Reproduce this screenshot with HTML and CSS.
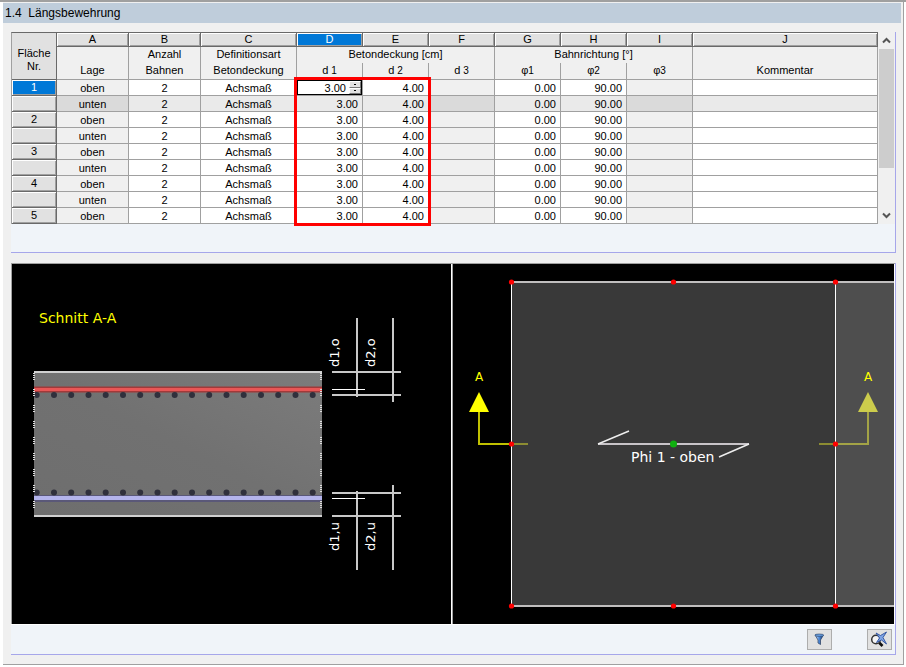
FILE: index.html
```html
<!DOCTYPE html>
<html lang="de">
<head>
    <meta charset="UTF-8">
    <meta name="viewport" content="width=device-width, initial-scale=1.0">
    <title>1.4 Längsbewehrung</title>
    <link rel="stylesheet" href="styles.css">
</head>
<body>
    <main class="window">
        <h1 class="title">1.4&nbsp; Längsbewehrung</h1>

        <section class="panel table-panel">
            <div class="grid-area">
                <div class="grid-wrap">
                    <table class="grid">
                        <colgroup>
                            <col class="w-nr"><col class="w-m"><col class="w-m"><col class="w-l">
                            <col class="w-s"><col class="w-s"><col class="w-s">
                            <col class="w-s"><col class="w-s"><col class="w-s"><col>
                        </colgroup>
                        <thead>
                            <tr class="letters">
                                <th class="corner" rowspan="3">Fläche<br>Nr.</th>
                                <th>A</th><th>B</th><th>C</th><th class="active">D</th><th>E</th><th>F</th>
                                <th>G</th><th>H</th><th>I</th><th>J</th>
                            </tr>
                            <tr class="names">
                                <th></th><th>Anzahl</th><th>Definitionsart</th>
                                <th colspan="3">Betondeckung [cm]</th>
                                <th colspan="3">Bahnrichtung [°]</th>
                                <th></th>
                            </tr>
                            <tr class="names last">
                                <th>Lage</th><th>Bahnen</th><th>Betondeckung</th>
                                <th>d <small>1</small></th><th>d <small>2</small></th><th>d <small>3</small></th>
                                <th>φ<small>1</small></th><th>φ<small>2</small></th><th>φ<small>3</small></th>
                                <th>Kommentar</th>
                            </tr>
                        </thead>
                        <tbody>
                            <tr>
                                <th class="active">1</th><td class="off">oben</td><td>2</td><td>Achsmaß</td>
                                <td class="edit">
                                    <div class="spin">
                                        <input type="text" value="3.00" aria-label="d 1">
                                        <div class="spin-btns">
                                            <button type="button" aria-label="Erhöhen"></button>
                                            <button type="button" aria-label="Verringern"></button>
                                        </div>
                                    </div>
                                </td>
                                <td class="num">4.00</td><td class="off"></td>
                                <td class="num">0.00</td><td class="num">90.00</td><td class="off"></td><td></td>
                            </tr>
                            <tr class="shade">
                                <th></th><td class="off">unten</td><td>2</td><td>Achsmaß</td>
                                <td class="num">3.00</td><td class="num">4.00</td><td class="off"></td>
                                <td class="num">0.00</td><td class="num">90.00</td><td class="off"></td><td></td>
                            </tr>
                            <tr>
                                <th>2</th><td class="off">oben</td><td>2</td><td>Achsmaß</td>
                                <td class="num">3.00</td><td class="num">4.00</td><td class="off"></td>
                                <td class="num">0.00</td><td class="num">90.00</td><td class="off"></td><td></td>
                            </tr>
                            <tr>
                                <th></th><td class="off">unten</td><td>2</td><td>Achsmaß</td>
                                <td class="num">3.00</td><td class="num">4.00</td><td class="off"></td>
                                <td class="num">0.00</td><td class="num">90.00</td><td class="off"></td><td></td>
                            </tr>
                            <tr>
                                <th>3</th><td class="off">oben</td><td>2</td><td>Achsmaß</td>
                                <td class="num">3.00</td><td class="num">4.00</td><td class="off"></td>
                                <td class="num">0.00</td><td class="num">90.00</td><td class="off"></td><td></td>
                            </tr>
                            <tr>
                                <th></th><td class="off">unten</td><td>2</td><td>Achsmaß</td>
                                <td class="num">3.00</td><td class="num">4.00</td><td class="off"></td>
                                <td class="num">0.00</td><td class="num">90.00</td><td class="off"></td><td></td>
                            </tr>
                            <tr>
                                <th>4</th><td class="off">oben</td><td>2</td><td>Achsmaß</td>
                                <td class="num">3.00</td><td class="num">4.00</td><td class="off"></td>
                                <td class="num">0.00</td><td class="num">90.00</td><td class="off"></td><td></td>
                            </tr>
                            <tr>
                                <th></th><td class="off">unten</td><td>2</td><td>Achsmaß</td>
                                <td class="num">3.00</td><td class="num">4.00</td><td class="off"></td>
                                <td class="num">0.00</td><td class="num">90.00</td><td class="off"></td><td></td>
                            </tr>
                            <tr>
                                <th>5</th><td class="off">oben</td><td>2</td><td>Achsmaß</td>
                                <td class="num">3.00</td><td class="num">4.00</td><td class="off"></td>
                                <td class="num">0.00</td><td class="num">90.00</td><td class="off"></td><td></td>
                            </tr>
                        </tbody>
                    </table>
                    <div class="marker"></div>
                </div>
                <div class="scrollbar">
                    <button type="button" aria-label="Nach oben">
                        <svg width="9" height="7" viewBox="0 0 9 7"><path d="M1 5.5 4.500 2 8 5.500" fill="none" stroke="#555" stroke-width="2"/></svg>
                    </button>
                    <div class="track"><div class="thumb"></div></div>
                    <button type="button" aria-label="Nach unten">
                        <svg width="9" height="7" viewBox="0 0 9 7"><path d="M1 1.500 4.500 5 8 1.500" fill="none" stroke="#555" stroke-width="2"/></svg>
                    </button>
                </div>
            </div>
        </section>

        <section class="panel view-panel">
            <div class="views">
                <div class="view section-view">
                    <svg viewBox="0 0 439 360" role="img" aria-label="Schnitt A-A">
                        <defs>
                            <linearGradient id="slab" x1="0" y1="1" x2="1" y2="0">
                                <stop offset="0" stop-color="#6e6e6e"/>
                                <stop offset="0.5" stop-color="#717171"/>
                                <stop offset="1" stop-color="#7c7c7c"/>
                            </linearGradient>
                            <clipPath id="slabClip"><rect x="22" y="107" width="288" height="146"/></clipPath>
                            <!-- one row of reinforcement bars -->
                            <g id="bars" fill="#30303c">
                                <circle cx="24.700" r="3"/><circle cx="42" r="3"/><circle cx="59.200" r="3"/>
                                <circle cx="76.500" r="3"/><circle cx="93.700" r="3"/><circle cx="111" r="3"/>
                                <circle cx="128.200" r="3"/><circle cx="145.500" r="3"/><circle cx="162.700" r="3"/>
                                <circle cx="180" r="3"/><circle cx="197.200" r="3"/><circle cx="214.500" r="3"/>
                                <circle cx="231.700" r="3"/><circle cx="249" r="3"/><circle cx="266.200" r="3"/>
                                <circle cx="283.500" r="3"/><circle cx="300.700" r="3"/>
                            </g>
                        </defs>
                        <text class="cad yellow" x="27" y="59">Schnitt A-A</text>

                        <rect x="22" y="108" width="288" height="144" fill="url(#slab)"/>
                        <path d="M22 125.500H310" stroke="#a03a3a" stroke-width="6"/>
                        <path d="M22 125.500H310" stroke="#e85656" stroke-width="3"/>
                        <path d="M22 234.500H310" stroke="#5a5878" stroke-width="7"/>
                        <path d="M22 234H310" stroke="#b4b4ec" stroke-width="4"/>
                        <g clip-path="url(#slabClip)">
                            <use href="#bars" y="131"/>
                            <use href="#bars" y="228.500"/>
                        </g>
                        <path d="M22 108H310M22 252H310" stroke="#d0d0d0" stroke-width="2"/>
                        <path d="M22 109V246M309 109V246" stroke="#ddd" stroke-width="2" stroke-dasharray="1 1 1 1 1 1 1 9"/>

                        <g stroke="#c8c8c8" stroke-width="2">
                            <path d="M345 54V133M381 54V138M320 108H389M320 131H389"/>
                            <path d="M345 227V306M381 221V306M320 229H389M320 252H389"/>
                        </g>
                        <path d="M320 125.500H353M320 234.500H353" stroke="#fff"/>
                        <text class="cad dim" transform="translate(327 103) rotate(-90)">d1,o</text>
                        <text class="cad dim" transform="translate(363 103) rotate(-90)">d2,o</text>
                        <text class="cad dim" transform="translate(327 287) rotate(-90)">d1,u</text>
                        <text class="cad dim" transform="translate(363 287) rotate(-90)">d2,u</text>
                    </svg>
                </div>
                <div class="view plan-view">
                    <svg viewBox="0 0 441 360" role="img" aria-label="Phi 1 - oben">
                        <rect x="58" y="18" width="325" height="324" fill="#393939"/>
                        <rect x="383" y="18" width="58" height="324" fill="#4e4e4e"/>
                        <path d="M58 18H441M58 342H441" stroke="#c0bebe" stroke-width="2"/>
                        <path d="M58.500 18V342M382.500 18V342" stroke="#fff"/>

                        <path d="M26 147V180H58" fill="none" stroke="#c0c000" stroke-width="2"/>
                        <path d="M59 180H75" stroke="#8c8c32" stroke-width="2"/>
                        <path d="M26 128 36 148H16z" fill="#ff0"/>
                        <text class="cad small yellow" x="26" y="117">A</text>

                        <path d="M366 180H382" stroke="#8c8c32" stroke-width="2"/>
                        <path d="M383 180H415V147" fill="none" stroke="#a3a346" stroke-width="2"/>
                        <path d="M415 128 425 148H405z" fill="#cccc4c"/>
                        <text class="cad small yellow" x="415" y="117">A</text>

                        <path d="M145 180H296" stroke="#c8c4c8" stroke-width="2"/>
                        <path d="M145 180 176 167M296 180 266 193" stroke="#eee" stroke-width="1.500"/>
                        <circle cx="220.500" cy="180" r="3.500" fill="#10b010"/>
                        <text class="cad" x="178" y="198">Phi 1 - oben</text>

                        <g fill="#f00">
                            <circle cx="58.500" cy="18" r="2.600"/><circle cx="220.500" cy="18" r="2.600"/><circle cx="382.500" cy="18" r="2.600"/>
                            <circle cx="58.500" cy="180" r="2.600"/><circle cx="382.500" cy="180" r="2.600"/>
                            <circle cx="58.500" cy="342" r="2.600"/><circle cx="220.500" cy="342" r="2.600"/><circle cx="382.500" cy="342" r="2.600"/>
                        </g>
                    </svg>
                </div>
            </div>
            <div class="toolbar">
                <button type="button" class="tool" aria-label="Filter">
                    <svg width="19" height="17" viewBox="0 0 19 17">
                        <defs>
                            <linearGradient id="funnel">
                                <stop offset="0" stop-color="#dcecff"/>
                                <stop offset="0.500" stop-color="#4a88d8"/>
                                <stop offset="1" stop-color="#0c2c66"/>
                            </linearGradient>
                        </defs>
                        <path d="M5 4 8 9v3l2.500 1.500V9L13.500 4z" fill="url(#funnel)" stroke="#2a3c5c" stroke-width=".7"/>
                        <ellipse cx="9.200" cy="4.200" rx="4.300" ry="1.200" fill="#6aa2e4" stroke="#2a3c5c" stroke-width=".6"/>
                    </svg>
                </button>
                <button type="button" class="tool" aria-label="Ansicht">
                    <svg width="19" height="17" viewBox="0 0 19 17">
                        <path d="M9 11.500 12.500 15" stroke="#111" stroke-width="2.600"/>
                        <circle cx="6" cy="8.500" r="4.300" fill="#f4f4f4" stroke="#333" stroke-width="1.500"/>
                        <path d="M6 2 10.500 4.500 16.500 1 13 6.500 16.500 13 11.500 9 6.500 11.500 9.500 7z" fill="#7fa4e4" stroke="#2c4f9c" stroke-width=".9"/>
                    </svg>
                </button>
            </div>
        </section>
    </main>
</body>
</html>
```
FILE: styles.css
```css
:root {
    --face: #f0f0f0;
    --line: #a0a0a0;
    --dark: #696969;
    --select: #0078d7;
    --panel: #f0f4f9;
    --panel-line: #a6a6ea;
}

* {
    box-sizing: border-box;
}

body {
    margin: 0;
    background-color: #fff;
    font-family: "Liberation Sans", Arial, sans-serif;
    font-size: 11px;
    color: #000;
    border-top: 2px solid var(--line);
}

.window {
    margin: 0 2px 2px 3px;
    padding-top: 1px;
    padding-bottom: 9px;
    background-color: var(--face);
    border-right: 1px solid var(--line);
    border-bottom: 1px solid var(--line);
}

.title {
    margin: 0 2px 0 0;
    padding-left: 2px;
    height: 20px;
    line-height: 20px;
    font-size: 12px;
    font-weight: normal;
    background-color: #bfcddb;
}

.panel {
    margin: 9px 7px 0 8px;
    background-color: var(--panel);
    border-right: 1px solid var(--panel-line);
    border-bottom: 1px solid var(--panel-line);
}

.table-panel {
    padding-bottom: 28px;
}

.grid-area {
    display: flex;
    padding-right: 1px;
    background-color: var(--face);
}

.grid-wrap {
    position: relative;
    flex: 1;
}

.grid {
    width: 100%;
    table-layout: fixed;
    border-collapse: separate;
    border-spacing: 0;
    border-top: 1px solid var(--dark);
    border-left: 1px solid var(--line);
}

.w-nr { width: 45px; }
.w-s { width: 66px; }
.w-m { width: 72px; }
.w-l { width: 96px; }

.grid th, .grid td {
    height: 16px;
    padding: 0;
    line-height: 15px;
    font-weight: normal;
    text-align: center;
    white-space: nowrap;
    border-right: 1px solid var(--line);
    border-bottom: 1px solid var(--line);
}

.grid td {
    padding-top: 2px;
    line-height: 13px;
    background-color: #fff;
}

.grid td.edit {
    padding-top: 0;
}

.grid td.off {
    background-color: var(--face);
}

.grid .shade td {
    background-color: #eaeaea;
}

.grid .shade td.off {
    background-color: #dadada;
}

.grid td.num {
    padding-right: 4px;
    text-align: right;
}

/* raised header cells */
.grid .letters th, .grid tbody th {
    background-color: #e1e1e1;
    border-color: var(--dark);
    box-shadow: inset 1px 1px #fff, inset -1px -1px var(--line);
}

.grid .letters th {
    height: 14px;
    line-height: 13px;
}

.grid .letters th.active, .grid tbody th.active {
    background-color: var(--select);
    color: #fff;
}

.grid .letters th.corner {
    padding-top: 7px;
    background-color: #e1e1e1;
    box-shadow: none;
}

.grid .names th {
    height: 16px;
    line-height: 14px;
    vertical-align: top;
    background-color: var(--face);
    border-bottom: 0;
}

.grid .names.last th {
    height: 17px;
    border-bottom: 1px solid var(--line);
}

.grid small {
    font-size: 10px;
    line-height: 1;
}

.spin {
    display: flex;
    height: 15px;
    border: 1px solid #000;
    background-color: #fff;
}

.spin input {
    flex: 1;
    min-width: 0;
    padding: 1px 3px 0 0;
    border: 0;
    outline: 0;
    font: inherit;
    text-align: right;
    background: none;
}

.spin-btns {
    display: flex;
    flex-direction: column;
    width: 12px;
}

.spin-btns button {
    flex: 1;
    min-height: 0;
    padding: 0;
    border: 1px solid;
    border-color: #fff #777 #777 #fff;
    background: linear-gradient(#000, #000) center / 2px 1px no-repeat #e1e1e1;
}

/* red frame round the cover columns */
.marker {
    position: absolute;
    left: 283px;
    top: 45px;
    bottom: -2px;
    width: 137px;
    border: 3px solid #f00;
    pointer-events: none;
}

.scrollbar {
    display: flex;
    flex-direction: column;
    width: 16px;
    padding-left: 1px;
}

.scrollbar button {
    display: flex;
    align-items: center;
    justify-content: center;
    height: 17px;
    padding: 0;
    border: 0;
    background: none;
}

.track {
    flex: 1;
}

.thumb {
    height: 75%;
    background-color: #cdcdcd;
}

.views {
    display: flex;
    border-top: 1px solid var(--line);
    border-bottom: 1px solid #fff;
}

.view {
    min-width: 0;
    background-color: #000;
    border-left: 1px solid var(--line);
    border-right: 1px solid #fff;
}

.section-view {
    flex: 441 1 0;
}

.plan-view {
    flex: 443 1 0;
}

.view svg {
    display: block;
    width: 100%;
    height: auto;
}

.cad {
    font-family: "DejaVu Sans", sans-serif;
    font-size: 14px;
    fill: #fff;
}

.cad.dim {
    font-size: 13px;
}

.cad.small {
    font-size: 12px;
    text-anchor: middle;
}

.cad.yellow {
    fill: #ff0;
}

.toolbar {
    display: flex;
    justify-content: flex-end;
    gap: 35px;
    padding: 4px 3px;
}

.tool {
    display: flex;
    align-items: center;
    justify-content: center;
    width: 25px;
    height: 21px;
    padding: 0;
    border: 1px solid #adadad;
    background-color: #e1e1e1;
}

.view-panel {
    margin-top: 10px;
}
```
